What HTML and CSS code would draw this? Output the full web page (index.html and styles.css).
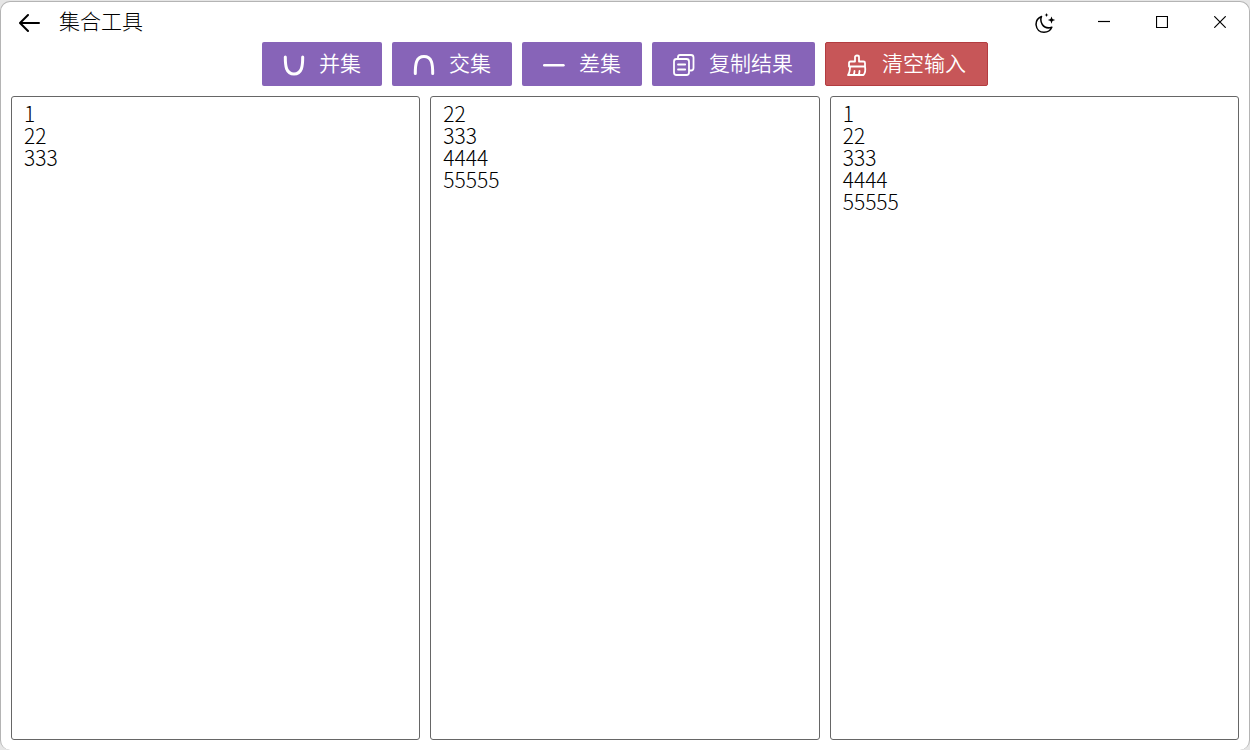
FILE: index.html
```html
<!DOCTYPE html>
<html lang="zh-CN">
<head>
<meta charset="utf-8">
<title>集合工具</title>
<link rel="stylesheet" href="styles.css">
</head>
<body>
<div class="window">
  <header class="titlebar">
    <button class="back" type="button" aria-label="返回">
      <svg width="22" height="20" viewBox="0 0 22 20"><path d="M20 10H1.500M9 2L1 10L9 18"/></svg>
    </button>
    <h1 class="title">集合工具</h1>
    <div class="controls">
      <button class="control mode" type="button" aria-label="夜间模式">
        <svg width="22" height="22" viewBox="0 0 22 22"><path d="M6.500 4.500C3 6 .800 9.200 1.100 13C1.600 17.500 4.800 20.300 9 20.300C12.500 20.300 15.500 18.500 16.800 15.300C13 16.500 9.300 15.500 7.300 12.500C5.700 10 5.500 7 6.500 4.500Z"/><path class="solid" d="M16.500 4.500L17.500 7L20.200 8L17.500 9L16.500 11.700L15.500 9L12.800 8L15.500 7ZM11.500 1L12.100 2.400L13.500 3L12.100 3.600L11.500 5L10.900 3.600L9.500 3L10.900 2.400Z"/></svg>
      </button>
      <button class="control" type="button" aria-label="最小化">
        <svg class="thin" width="12" height="12" viewBox="0 0 12 12"><path d="M0 5.500H12"/></svg>
      </button>
      <button class="control" type="button" aria-label="最大化">
        <svg class="thin" width="12" height="12" viewBox="0 0 12 12"><path d="M.5 .5H11.500V11.500H.5Z"/></svg>
      </button>
      <button class="control" type="button" aria-label="关闭">
        <svg class="thin" width="12" height="12" viewBox="0 0 12 12"><path d="M.3 .3L11.700 11.700M11.700 .3L.3 11.700"/></svg>
      </button>
    </div>
  </header>
  <div class="toolbar">
    <button class="action" type="button">
      <svg class="bold" width="24" height="24" viewBox="0 0 24 24"><path d="M3.300 4C3.300 13 4 21 12 21S20.700 13 20.700 4"/></svg>
      <span class="label">并集</span>
    </button>
    <button class="action" type="button">
      <svg class="bold" width="24" height="24" viewBox="0 0 24 24"><path d="M3.300 20.500C3.300 11 4 3.500 12 3.500S20.700 11 20.700 20.500"/></svg>
      <span class="label">交集</span>
    </button>
    <button class="action" type="button">
      <svg class="medium" width="24" height="24" viewBox="0 0 24 24"><path d="M2.200 12.200H21.500"/></svg>
      <span class="label">差集</span>
    </button>
    <button class="action wide" type="button">
      <svg width="24" height="24" viewBox="0 0 24 24"><rect x="2" y="6" width="15" height="16" rx="2.500"/><path d="M6 5.500V4Q6 2 8 2H19Q21.500 2 21.500 4.500V15Q21.500 17.500 19 17.500H18M6 11.500H13.200M6 16.500H13.200"/></svg>
      <span class="label">复制结果</span>
    </button>
    <button class="action wide danger" type="button">
      <svg width="24" height="24" viewBox="0 0 24 24"><path d="M10 8.500V4Q10 2.500 12 2.500T14 4V8.500H18.500Q20 8.500 20 10V13.500H4V10Q4 8.500 5.500 8.500ZM5 13.500C5 17 4.500 20 3 22H18.500Q21 19 20 13.500M8.500 22Q9.500 20.500 9.500 18M13.500 22Q14.500 20.500 14.500 18"/></svg>
      <span class="label">清空输入</span>
    </button>
  </div>
  <main class="panes">
    <textarea class="pane" aria-label="集合一" spellcheck="false">1
22
333</textarea>
    <textarea class="pane" aria-label="集合二" spellcheck="false">22
333
4444
55555</textarea>
    <textarea class="pane" aria-label="结果" spellcheck="false" readonly>1
22
333
4444
55555</textarea>
  </main>
</div>
</body>
</html>
```
FILE: styles.css
```css
* {
  box-sizing: border-box;
}

body {
  margin: 0;
  padding-top: 1px;
  height: 100vh;
  background: #e6e6e6;
  color: #000;
  font-family: "Noto Sans CJK SC", sans-serif;
  font-weight: 300;
}

.window {
  display: flex;
  flex-direction: column;
  height: 100%;
  border: 1px solid #b4b4b4;
  border-bottom: 0;
  border-radius: 10px;
  background: #fff;
}

button {
  margin: 0;
  border: 0;
  padding: 0;
  background: none;
  color: inherit;
  font: inherit;
}

svg {
  flex: none;
  fill: none;
  stroke: currentColor;
  stroke-width: 2;
  stroke-linecap: round;
  stroke-linejoin: round;
}

.titlebar {
  display: flex;
  align-items: flex-start;
  height: 40px;
}

.back {
  display: flex;
  align-items: center;
  justify-content: center;
  width: 58px;
  height: 40px;
  padding-top: 2px;
}

.title {
  margin: 0;
  font-size: 21px;
  font-weight: 300;
  line-height: 36px;
}

.controls {
  display: flex;
  margin-left: auto;
}

.control {
  display: flex;
  align-items: center;
  justify-content: center;
  width: 58px;
  height: 40px;
}

.control svg {
  stroke-width: 1.500;
}

.mode {
  padding-top: 2px;
}

.control .thin {
  stroke-width: 1.200;
  stroke-linecap: butt;
  stroke-linejoin: miter;
}

.control .solid {
  fill: currentColor;
  stroke: none;
}

.toolbar {
  display: flex;
  justify-content: center;
  gap: 10px;
}

.action {
  display: flex;
  align-items: center;
  gap: 13px;
  height: 44px;
  padding: 2px 21px 0 20px;
  border-radius: 2px;
  background: #8764b8;
  color: #fff;
  font-size: 21px;
  font-weight: 350;
  line-height: 30px;
}

.label {
  padding-bottom: 6px;
}

.wide {
  width: 163px;
}

.action svg {
  stroke-width: 1.800;
}

.action .bold {
  stroke-width: 3;
}

.action .medium {
  stroke-width: 2.400;
}

.danger {
  border: 1px solid #b33c40;
  padding: 1px 19px 0;
}

.action.danger {
  background: #c75658;
}

.panes {
  display: grid;
  flex: 1;
  grid-template-columns: 409fr 389fr 409fr;
  gap: 10px;
  padding: 10px;
}

.pane {
  display: block;
  width: 100%;
  height: 100%;
  border: 1px solid #666;
  border-radius: 3px;
  padding: 5px 12px;
  outline: none;
  resize: none;
  background: #fff;
  color: #000;
  font: 300 21px/22px "Noto Sans CJK SC", sans-serif;
}
```
